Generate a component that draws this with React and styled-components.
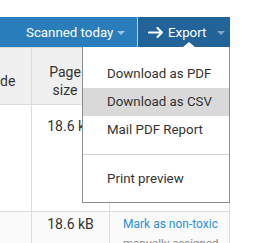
import React from 'react';
import styled, { createGlobalStyle } from 'styled-components';

const Global = createGlobalStyle`
  html, body { margin: 0; padding: 0; background: #fff; }
  body { font-family: Roboto, "Liberation Sans", Arial, sans-serif; overflow: hidden; }
`;

const Page = styled.div`
  position: relative;
  width: 256px;
  height: 243px;
  padding-top: 17px;
  box-sizing: border-box;
  overflow: hidden;
`;

const Toolbar = styled.div`
  display: flex;
  width: 230px;
  height: 30px;
`;

const ToolButton = styled.div`
  display: flex;
  align-items: center;
  box-sizing: border-box;
  height: 100%;
  color: #fff;
  font-size: 13.3px;
  background: ${p => (p.$dark ? '#22649a' : '#2a7dbb')};
  width: ${p => p.$width}px;
  padding-left: ${p => p.$pad}px;
  border-left: ${p => (p.$dark ? '1px solid #b9d3e8' : 'none')};
  svg { margin-right: 4px; }
`;

const Caret = styled.span`
  width: 0;
  height: 0;
  margin-left: ${p => p.$gap}px;
  margin-top: 2px;
  border-left: 4px solid transparent;
  border-right: 4px solid transparent;
  border-top: 4px solid ${p => (p.$dim ? '#7fa6c6' : '#9cc4e4')};
`;

const Table = styled.div`
  display: grid;
  grid-template-columns: 32px 78px 120px;
  width: 230px;
  border-top: 1px solid #d8d8d8;
  box-sizing: border-box;
`;

const Cell = styled.div`
  box-sizing: border-box;
  border-right: 1px solid #dcdcdc;
  border-bottom: 1px solid #dcdcdc;
  background: ${p => p.$bg || '#fff'};
  height: ${p => p.$h}px;
  font-size: 14px;
  color: #333;
  text-align: center;
  overflow: hidden;
  white-space: nowrap;
`;

const HeadCell = styled(Cell)`
  display: flex;
  flex-direction: column;
  justify-content: center;
  padding-top: 9px;
  line-height: 18px;
  text-align: ${p => p.$align || 'center'};
  padding-right: ${p => p.$pr || 0}px;
`;

const Value = styled.div`
  padding-top: ${p => p.$top}px;
  line-height: 18px;
`;

const Action = styled.div`
  padding: 4px 0 0 13px;
  text-align: left;
`;

const Link = styled.div`
  color: #2b8fd8;
  font-size: 12px;
  line-height: 16px;
`;

const Note = styled.div`
  color: #888;
  font-size: 11.5px;
  line-height: 16px;
  margin-top: 3px;
`;

const Menu = styled.div`
  position: absolute;
  left: 82px;
  top: 47px;
  width: 148px;
  box-sizing: border-box;
  background: #fff;
  border: 1px solid #8c8c8c;
  border-top: none;
  padding: 13px 0 9px;
`;

const Notch = styled.span`
  position: absolute;
  top: -5px;
  left: 100px;
  border-left: 6px solid transparent;
  border-right: 6px solid transparent;
  border-bottom: 5px solid #fff;
`;

const Item = styled.div`
  height: 28px;
  line-height: 28px;
  padding-left: 24px;
  font-size: 13.3px;
  color: #333;
  background: ${p => (p.$active ? '#d9d9d9' : 'transparent')};
`;

const Divider = styled.div`
  height: 1px;
  background: #d4d4d4;
  margin: 10px 0;
`;

const Arrow = () => (
  <svg width="16" height="11" viewBox="0 0 16 11" fill="none" stroke="#fff" strokeWidth="2" strokeLinecap="round" strokeLinejoin="round">
    <path d="M1 5.5h13M9.5 1l4.5 4.5L9.5 10" />
  </svg>
);

export default function App() {
  return (
    <Page>
      <Global />
      <Toolbar>
        <ToolButton $width={137} $pad={26}>
          Scanned today<Caret $gap={4} />
        </ToolButton>
        <ToolButton $dark $width={93} $pad={10}>
          <Arrow />
          Export<Caret $gap={11} $dim />
        </ToolButton>
      </Toolbar>
      <Table>
        <HeadCell $h={57} $bg="#f0f0f0" $align="right" $pr={19}>
          de
        </HeadCell>
        <HeadCell $h={57} $bg="#f0f0f0" $pr={11}>
          <div>Page</div>
          <div>size</div>
        </HeadCell>
        <HeadCell $h={57} $bg="#f0f0f0" />
        <Cell $h={107} />
        <Cell $h={107}>
          <Value $top={12}>18.6 kB</Value>
        </Cell>
        <Cell $h={107} />
        <Cell $h={40} $bg="#fafafa" />
        <Cell $h={40} $bg="#fafafa">
          <Value $top={3}>18.6 kB</Value>
        </Cell>
        <Cell $h={40} $bg="#fafafa">
          <Action>
            <Link>Mark as non-toxic</Link>
            <Note>manually assigned</Note>
          </Action>
        </Cell>
      </Table>
      <Menu>
        <Notch />
        <Item>Download as PDF</Item>
        <Item $active>Download as CSV</Item>
        <Item>Mail PDF Report</Item>
        <Divider />
        <Item>Print preview</Item>
      </Menu>
    </Page>
  );
}
